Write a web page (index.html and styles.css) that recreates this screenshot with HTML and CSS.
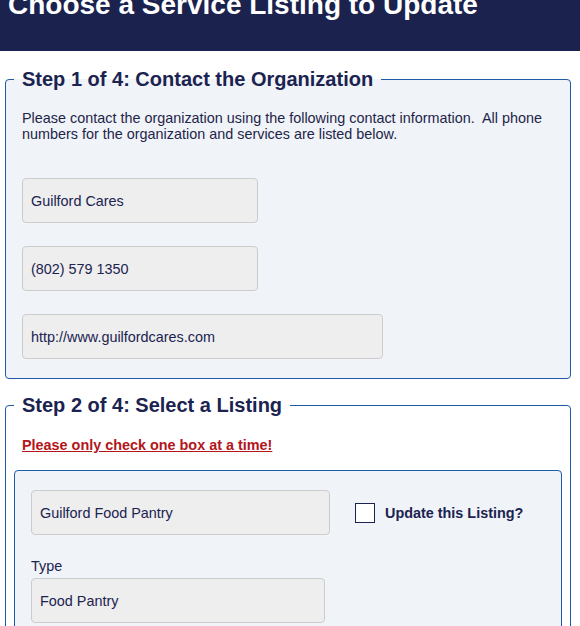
FILE: index.html
```html
<!DOCTYPE html>
<html lang="en">
<head>
<meta charset="utf-8">
<title>Choose a Service Listing to Update</title>
<link rel="stylesheet" href="styles.css">
</head>
<body>
<header class="page-header">
  <h1 class="page-title">Choose a Service Listing to Update</h1>
</header>
<main class="content">
  <fieldset class="step step-contact">
    <legend class="step-legend">Step 1 of 4: Contact the Organization</legend>
    <div class="step-body">
      <p class="intro">Please contact the organization using the following contact information.&nbsp; All phone numbers for the organization and services are listed below.</p>
      <div class="field-stack">
        <div class="field field-short">Guilford Cares</div>
        <div class="field field-short">(802) 579 1350</div>
        <div class="field field-long">http://www.guilfordcares.com</div>
      </div>
    </div>
  </fieldset>

  <fieldset class="step step-select">
    <legend class="step-legend">Step 2 of 4: Select a Listing</legend>
    <p class="warning"><a href="#" class="warning-link">Please only check one box at a time!</a></p>
    <div class="listing">
      <div class="listing-row">
        <div class="field field-name">Guilford Food Pantry</div>
        <label class="check">
          <span class="check-box"></span>
          <span class="check-label">Update this Listing?</span>
        </label>
      </div>
      <div class="listing-type">
        <div class="type-label">Type</div>
        <div class="field field-type">Food Pantry</div>
      </div>
    </div>
  </fieldset>
</main>
</body>
</html>
```
FILE: styles.css
```css
html, body {
  margin: 0;
  padding: 0;
  background: #ffffff;
  font-family: "Liberation Sans", Arial, sans-serif;
  color: #1b2350;
  overflow: hidden;
}

.page-header {
  background: #1b224e;
  height: 51px;
  padding: 0 8px;
  overflow: hidden;
}

.page-title {
  margin: -11px 0 0;
  font-size: 28px;
  line-height: 32px;
  font-weight: bold;
  color: #ffffff;
}

.content {
  padding: 17px 9px 0 5px;
}

.step {
  margin: 0;
  padding: 0 8px;
  border: 1px solid #1f5aa6;
  border-radius: 4px;
  min-width: 0;
}

.step-contact {
  background: #f0f3f8;
  padding-bottom: 19px;
}

.step-select {
  margin-top: 15px;
  background: #ffffff;
}

.step-legend {
  padding: 0 8px;
  font-size: 20px;
  line-height: 22px;
  font-weight: bold;
  color: #1b2350;
}

.step-body {
  padding: 0 8px;
}

.intro {
  margin: 20px 0 0;
  font-size: 14.4px;
  line-height: 16px;
  color: #1e2548;
}

.field-stack {
  margin-top: 36px;
  display: flex;
  flex-direction: column;
  gap: 23px;
}

.field {
  box-sizing: border-box;
  height: 45px;
  padding: 0 8px;
  display: flex;
  align-items: center;
  background: #eeeeee;
  border: 1px solid #cccccc;
  border-radius: 4px;
  font-size: 14.4px;
  color: #1b2350;
}

.field-short { width: 236px; }
.field-long { width: 361px; }
.field-name { width: 299px; }
.field-type { width: 294px; }

.warning {
  margin: 21px 0 0 8px;
  font-size: 14.4px;
  line-height: 16px;
  font-weight: bold;
}

.warning-link {
  color: #b3151b;
  text-decoration: underline;
}

.listing {
  margin-top: 17px;
  border: 1px solid #1f5aa6;
  border-radius: 4px;
  background: #f0f3f8;
  padding: 19px 16px 24px;
  width: 514px;
}

.listing-row {
  display: flex;
  align-items: center;
}

.check {
  margin-left: 25px;
  display: flex;
  align-items: center;
  gap: 10px;
}

.check-box {
  box-sizing: border-box;
  width: 20px;
  height: 20px;
  background: #ffffff;
  border: 1px solid #1b2350;
}

.check-label {
  font-size: 14.4px;
  font-weight: bold;
  color: #1b2350;
}

.listing-type {
  margin-top: 23px;
}

.type-label {
  font-size: 14.4px;
  line-height: 16px;
  margin-bottom: 4px;
  color: #1b2350;
}
```
